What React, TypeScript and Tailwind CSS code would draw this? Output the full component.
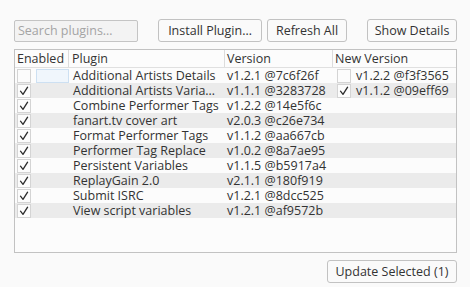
import React from "react";

const rows = [
  { on: false, name: "Additional Artists Details", ver: "v1.2.1 @7c6f26f", nv: "v1.2.2 @f3f3565", nvOn: false, focus: true },
  { on: true, name: "Additional Artists Varia…", ver: "v1.1.1 @3283728", nv: "v1.1.2 @09eff69", nvOn: true },
  { on: true, name: "Combine Performer Tags", ver: "v1.2.2 @14e5f6c" },
  { on: true, name: "fanart.tv cover art", ver: "v2.0.3 @c26e734" },
  { on: true, name: "Format Performer Tags", ver: "v1.1.2 @aa667cb" },
  { on: true, name: "Performer Tag Replace", ver: "v1.0.2 @8a7ae95" },
  { on: true, name: "Persistent Variables", ver: "v1.1.5 @b5917a4" },
  { on: true, name: "ReplayGain 2.0", ver: "v2.1.1 @180f919" },
  { on: true, name: "Submit ISRC", ver: "v1.2.1 @8dcc525" },
  { on: true, name: "View script variables", ver: "v1.2.1 @af9572b" },
];

function Box({ on }: { on: boolean }) {
  return (
    <div className="w-[14px] h-[14px] border border-[#d4d4d4] bg-[#fcfcfc] flex items-center justify-center overflow-hidden">
      {on ? (
        <svg width="10" height="10" viewBox="0 0 10 10" fill="none">
          <path d="M1.5 5.2 L4 8.3 L8.6 1.2" stroke="#2a2a2a" strokeWidth="1.3" strokeLinecap="round" strokeLinejoin="round" />
        </svg>
      ) : null}
    </div>
  );
}

function Btn({ children, w }: { children: React.ReactNode; w: string }) {
  return (
    <div className={`${w} h-[23px] border border-[#c2c2c2] rounded-[3px] bg-[#fafafa] flex items-center justify-center text-[#333333]`}>
      {children}
    </div>
  );
}

export default function App() {
  return (
    <div
      className="w-[470px] h-[287px] bg-[#fafafa] text-[#333333] text-[12.5px] leading-[15px] overflow-hidden"
      style={{ fontFamily: '"Open Sans", "Noto Sans", sans-serif' }}
    >
      <div className="pt-[19px] pl-[14px] pr-[13px] flex items-center">
        <div className="w-[124px] h-[22px] border border-[#c4c4c4] rounded-[2px] bg-[#f3f3f3] flex items-center pl-[3px] text-[#a4a4a4]">
          Search plugins…
        </div>
        <div className="ml-[20px]">
          <Btn w="w-[104px]">Install Plugin…</Btn>
        </div>
        <div className="ml-[5px]">
          <Btn w="w-[80px]">Refresh All</Btn>
        </div>
        <div className="ml-auto">
          <Btn w="w-[90px]">Show Details</Btn>
        </div>
      </div>
      <div className="mt-[7px] ml-[14px] w-[443px] h-[204px] border border-[#c2c2c2] bg-[#fcfcfc]">
        <div className="flex h-[18px] border-b border-[#e0e0e0] items-center">
          <div className="w-[54px] h-full border-r border-[#dcdcdc] pl-[2px] flex items-center">Enabled</div>
          <div className="w-[156px] h-full border-r border-[#dcdcdc] pl-[3px] flex items-center">Plugin</div>
          <div className="w-[108px] h-full border-r border-[#dcdcdc] pl-[2px] flex items-center">Version</div>
          <div className="flex-1 h-full pl-[2px] flex items-center">New Version</div>
        </div>
        {rows.map((r, i) => (
          <div key={i} className={`flex h-[15px] items-center ${i % 2 === 1 ? "bg-[#ebebeb]" : ""}`}>
            <div className="w-[54px] h-full flex items-center pl-[2px]">
              <Box on={r.on} />
              {r.focus ? (
                <div className="ml-[5px] w-[33px] h-[14px] border border-[#cde0f2] bg-[#f0f6fc]" />
              ) : null}
            </div>
            <div className="w-[156px] pl-[4px] whitespace-nowrap overflow-hidden">{r.name}</div>
            <div className="w-[108px] pl-[2px] whitespace-nowrap">{r.ver}</div>
            <div className="flex-1 flex items-center pl-[4px]">
              {r.nv ? (
                <>
                  <Box on={!!r.nvOn} />
                  <span className="ml-[5px] whitespace-nowrap">{r.nv}</span>
                </>
              ) : null}
            </div>
          </div>
        ))}
      </div>
      <div className="mt-[7px] pr-[13px] flex justify-end">
        <Btn w="w-[130px]">Update Selected (1)</Btn>
      </div>
    </div>
  );
}
